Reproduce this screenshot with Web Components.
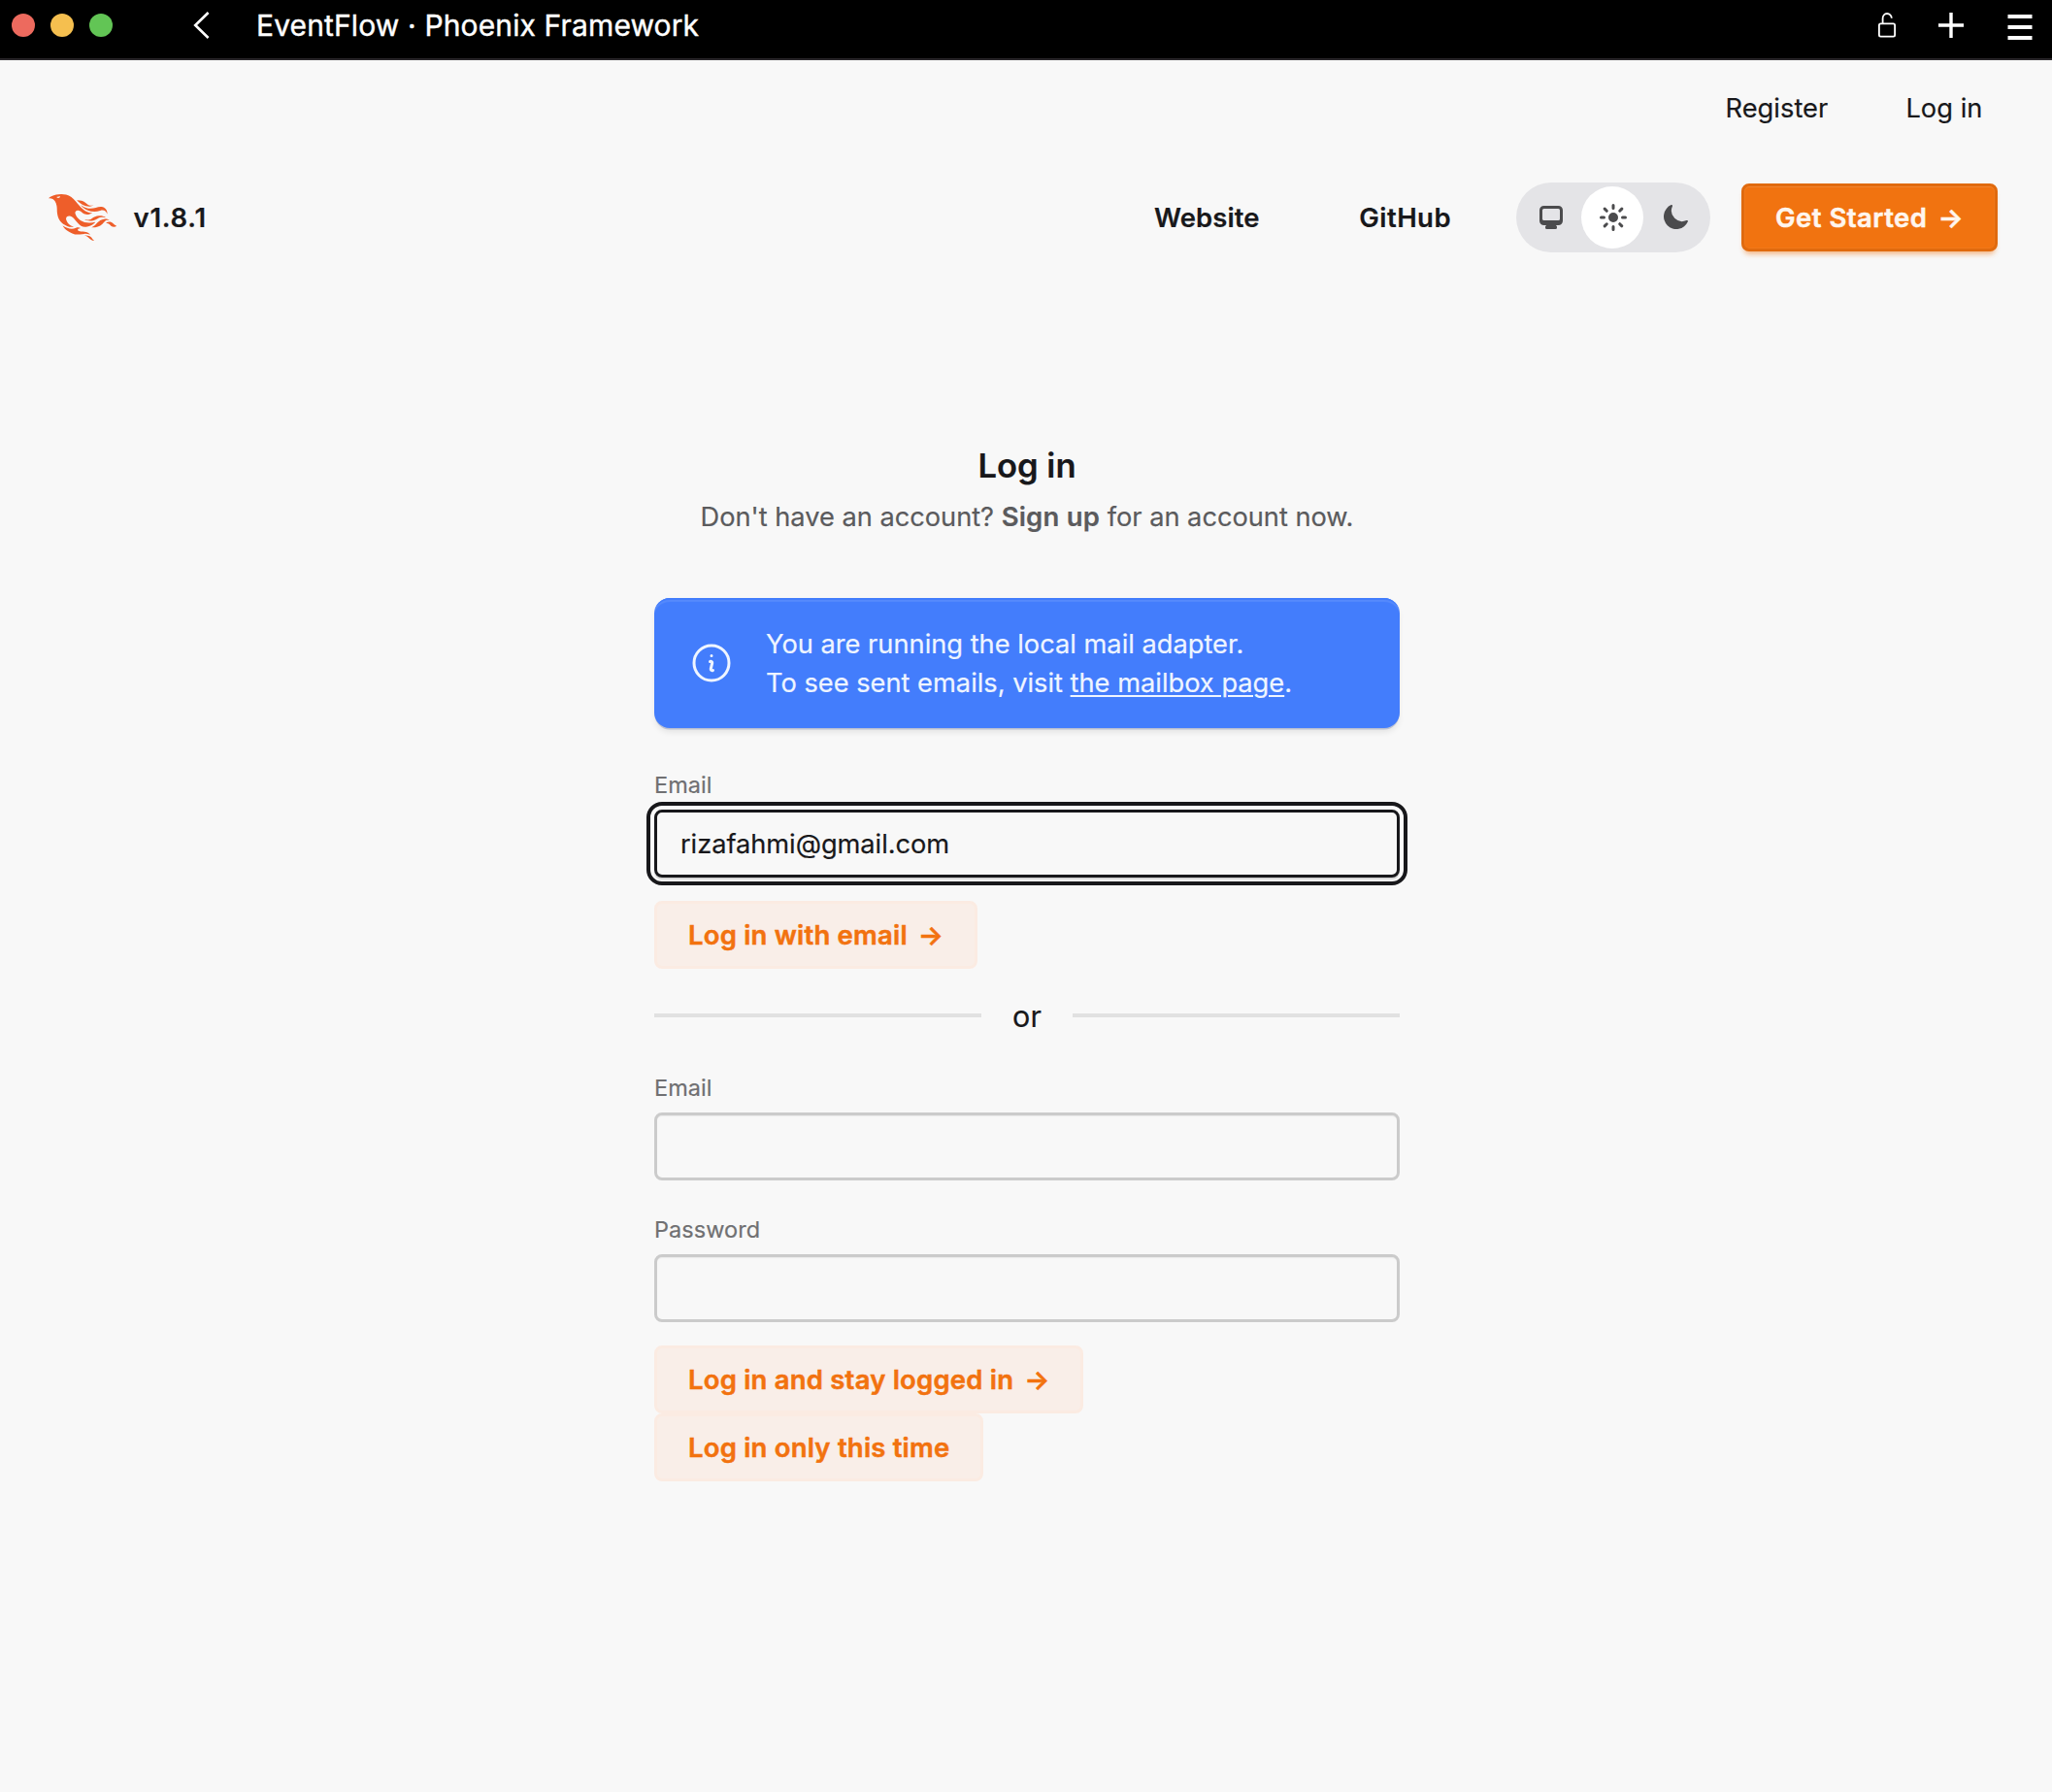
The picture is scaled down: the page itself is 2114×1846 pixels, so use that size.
<!DOCTYPE html>
<html lang="en">
<head>
<meta charset="utf-8">
<title>EventFlow · Phoenix Framework</title>
<style>
  html, body { margin: 0; padding: 0; background: #f8f8f8; }
  body {
    font-family: Inter, "Liberation Sans", sans-serif;
    font-size: 27.25px;
    line-height: 40px;
    color: #18181b;
    min-height: 1846px;
    overflow: hidden;
    -webkit-text-stroke-width: .2px;
  }
</style>
</head>
<body>
<window-bar>EventFlow · Phoenix Framework</window-bar>
<user-menu>
  <menu-link>Register</menu-link>
  <menu-link>Log in</menu-link>
</user-menu>
<site-header version="v1.8.1">
  <nav-link>Website</nav-link>
  <nav-link style="--gap: 102.5px; --spacing: .45px">GitHub</nav-link>
  <theme-toggle></theme-toggle>
  <app-button variant="primary" arrow style="--width: 264px">Get Started</app-button>
</site-header>
<login-page></login-page>

<script>
function define(name, html) {
  const template = document.createElement('template');
  template.innerHTML = html;
  customElements.define(name, class extends HTMLElement {
    constructor() {
      super();
      this.attachShadow({ mode: 'open' }).append(template.content.cloneNode(true));
    }
    connectedCallback() {
      for (const slot of this.shadowRoot.querySelectorAll('[data-attr]')) {
        slot.textContent = this.getAttribute(slot.dataset.attr) || '';
      }
    }
  });
}

define('window-bar', `
  <style>
    :host { display: flex; align-items: center; box-sizing: border-box; height: 62px; padding: 0 20px 8px 12px;
      background: #000; border-bottom: 2px solid #29262a; color: #fff; font-size: 30px; white-space: nowrap;
      letter-spacing: .13px; -webkit-text-stroke-width: .4px; }
    i { width: 24px; height: 24px; border-radius: 50%; margin-right: 16px; }
    .r { background: #ed6a5e } .y { background: #f5bf4f } .g { background: #62c555; margin-right: 0 }
    svg { display: block; fill: none; stroke: #fff; flex: none; }
    .back { margin-left: 83px; margin-right: 47px; }
    .lock { margin-left: auto; }
    .plus { margin-left: 44px; }
    .menu { margin-left: 45px; position: relative; top: 2px; }
  </style>
  <i class="r"></i><i class="y"></i><i class="g"></i>
  <svg class="back" width="18" height="28" viewBox="0 0 18 28" stroke-width="2.6"><path d="M15.6 1 2.2 14l13.4 13"/></svg>
  <span><slot></slot></span>
  <svg class="lock" width="18" height="26" viewBox="0 0 18 26" stroke-width="1.8"><rect x=".9" y="11.3" width="16.2" height="13.4" rx="1.6"/><path d="M4.6 11.3V6.2a4.6 5 0 0 1 9.2-.4"/></svg>
  <svg class="plus" width="26" height="26" viewBox="0 0 26 26" stroke-width="3.4"><path d="M13 0v26M0 13h26"/></svg>
  <svg class="menu" width="26" height="26" viewBox="0 0 26 26" stroke-width="4"><path d="M.5 2h25M.5 13h25M.5 24h25"/></svg>
`);

define('menu-link', `
  <style>:host { display: block; white-space: nowrap; letter-spacing: .05px; }</style>
  <slot></slot>
`);

define('user-menu', `
  <style>:host { display: flex; justify-content: flex-end; gap: 80px; height: 40px; padding: 30px 71.5px 0 0; }</style>
  <slot></slot>
`);

define('nav-link', `
  <style>:host { display: block; white-space: nowrap; font-weight: 600; font-size: 27.5px; letter-spacing: var(--spacing, .1px); margin-left: var(--gap, 0); }</style>
  <slot></slot>
`);

define('app-logo', `
  <style>:host { display: block; } svg { display: block; }</style>
  <svg width="71" height="48" viewBox="0 0 71 48"><path fill="#ee5e2a" d="m26.371 33.477-.552-.1c-3.92-.729-6.397-3.1-7.57-6.829-.733-2.324.597-4.035 3.035-4.148 1.995-.092 3.362 1.055 4.57 2.39 1.557 1.72 2.984 3.558 4.514 5.305 2.202 2.515 4.797 4.134 8.347 3.634 3.183-.448 5.958-1.725 8.371-3.828.363-.316.761-.592 1.144-.886l-.241-.284c-2.027.63-4.093.841-6.205.735-3.195-.16-6.24-.828-8.964-2.582-2.486-1.601-4.319-3.746-5.19-6.611-.704-2.315.736-3.934 3.135-3.6.948.133 1.746.56 2.463 1.165.583.493 1.143 1.015 1.738 1.493 2.8 2.25 6.712 2.375 10.265-.068-5.842-.026-9.817-3.24-13.308-7.313-1.366-1.594-2.7-3.216-4.095-4.785-2.698-3.036-5.692-5.71-9.79-6.623C12.8-.623 7.745.14 2.893 2.361 1.926 2.804.997 3.319 0 4.149c.494 0 .763.006 1.032 0 2.446-.064 4.28 1.023 5.602 3.024.962 1.457 1.415 3.104 1.761 4.798.513 2.515.247 5.078.544 7.605.761 6.494 4.08 11.026 10.26 13.346 2.267.852 4.591 1.135 7.172.555ZM10.751 3.852c-.976.246-1.756-.148-2.56-.962 1.377-.343 2.592-.476 3.897-.528-.107.848-.607 1.306-1.336 1.49Zm32.002 37.924c-.085-.626-.62-.901-1.04-1.228-1.857-1.446-4.03-1.958-6.333-2-1.375-.026-2.735-.128-4.031-.61-.595-.22-1.26-.505-1.244-1.272.015-.78.693-1 1.31-1.184.505-.15 1.026-.247 1.6-.382-1.46-.936-2.886-1.065-4.787-.3-2.993 1.202-5.943 1.06-8.926-.017-1.684-.608-3.179-1.563-4.735-2.408l-.077.057c1.29 2.115 3.034 3.817 5.004 5.271 3.793 2.8 7.936 4.471 12.784 3.73A66.714 66.714 0 0 1 37 40.877c1.98-.16 3.866.398 5.753.899Zm-9.14-30.345c-.105-.076-.206-.266-.42-.069 1.745 2.36 3.985 4.098 6.683 5.193 4.354 1.767 8.773 2.07 13.293.51 3.51-1.21 6.033-.028 7.343 3.38.19-3.955-2.137-6.837-5.843-7.401-2.084-.318-4.01.373-5.962.94-5.434 1.575-10.485.798-15.094-2.553Zm27.085 15.425c.708.059 1.416.123 2.124.185-1.6-1.405-3.55-1.517-5.523-1.404-3.003.17-5.167 1.903-7.14 3.972-1.739 1.824-3.31 3.87-5.903 4.604.043.078.054.117.066.117.35.005.699.021 1.047.005 3.768-.17 7.317-.965 10.14-3.7.89-.86 1.685-1.817 2.544-2.71.716-.746 1.584-1.159 2.645-1.07Zm-8.753-4.67c-2.812.246-5.254 1.409-7.548 2.943-1.766 1.18-3.654 1.738-5.776 1.37-.374-.066-.75-.114-1.124-.17l-.013.156c.135.07.265.151.405.207.354.14.702.308 1.07.395 4.083.971 7.992.474 11.516-1.803 2.221-1.435 4.521-1.707 7.013-1.336.252.038.503.083.756.107.234.022.479.255.795.003-2.179-1.574-4.526-2.096-7.094-1.872Zm-10.049-9.544c1.475.051 2.943-.142 4.486-1.059-.452.04-.643.04-.827.076-2.126.424-4.033-.04-5.733-1.383-.623-.493-1.257-.974-1.889-1.457-2.503-1.914-5.374-2.555-8.514-2.5.05.154.054.26.108.315 3.417 3.455 7.371 5.836 12.369 6.008Zm24.727 17.731c-2.114-2.097-4.952-2.367-7.578-.537 1.738.078 3.043.632 4.101 1.728a13 13 0 0 0 1.182 1.106c1.6 1.29 4.311 1.352 5.896.155-1.861-.726-1.861-.726-3.601-2.452Zm-21.058 16.06c-1.858-3.46-4.981-4.24-8.59-4.008a9.667 9.667 0 0 1 2.977 1.39c.84.586 1.547 1.311 2.243 2.055 1.38 1.473 3.534 2.376 4.962 2.07-.656-.412-1.238-.848-1.592-1.507Z"/></svg>
`);

define('theme-toggle', `
  <style>
    :host { display: grid; grid-template-columns: 67px 64px 1fr; align-items: center; justify-items: center; box-sizing: border-box;
      width: 200px; height: 72px; border-radius: 36px; background: #e4e4e7; margin-left: 67px; }
    svg { display: block; width: 32px; height: 32px; fill: #4b4b4d; }
    span { display: grid; place-items: center; }
    .on { width: 64px; height: 64px; border-radius: 50%; background: #fff; }
    .on svg { margin-left: 2px; }
    .sys svg { margin-left: 5px; }
    .moon svg { margin-right: 4px; }
  </style>
  <span class="sys"><svg viewBox="0 0 16 16"><path fill-rule="evenodd" d="M2 4.25A2.25 2.25 0 0 1 4.25 2h7.5A2.25 2.25 0 0 1 14 4.25v5.5A2.25 2.25 0 0 1 11.75 12h-1.312c.1.128.21.248.328.36a.75.75 0 0 1 .234.545v.345a.75.75 0 0 1-.75.75h-4.5a.75.75 0 0 1-.75-.75v-.345a.75.75 0 0 1 .234-.545c.118-.111.228-.232.328-.36H4.25A2.25 2.25 0 0 1 2 9.75v-5.5Zm2.25-.75a.75.75 0 0 0-.75.75v4.5c0 .414.336.75.75.75h7.5a.75.75 0 0 0 .75-.75v-4.5a.75.75 0 0 0-.75-.75h-7.5Z"/></svg></span>
  <span class="on"><svg viewBox="0 0 16 16"><path d="M8 1a.75.75 0 0 1 .75.75v1.5a.75.75 0 0 1-1.5 0v-1.5A.75.75 0 0 1 8 1ZM10.5 8a2.5 2.5 0 1 1-5 0 2.5 2.5 0 0 1 5 0ZM12.95 4.11a.75.75 0 1 0-1.06-1.06l-1.062 1.06a.75.75 0 0 0 1.061 1.062l1.06-1.061ZM15 8a.75.75 0 0 1-.75.75h-1.5a.75.75 0 0 1 0-1.5h1.5A.75.75 0 0 1 15 8ZM11.89 12.95a.75.75 0 0 0 1.06-1.06l-1.06-1.062a.75.75 0 0 0-1.062 1.061l1.061 1.06ZM8 12a.75.75 0 0 1 .75.75v1.5a.75.75 0 0 1-1.5 0v-1.5A.75.75 0 0 1 8 12ZM5.172 11.89a.75.75 0 0 0-1.061-1.062L3.05 11.89a.75.75 0 1 0 1.06 1.06l1.06-1.06ZM4 8a.75.75 0 0 1-.75.75h-1.5a.75.75 0 0 1 0-1.5h1.5A.75.75 0 0 1 4 8ZM4.11 5.172A.75.75 0 0 0 5.173 4.11L4.11 3.05a.75.75 0 1 0-1.06 1.06l1.06 1.06Z"/></svg></span>
  <span class="moon"><svg viewBox="0 0 16 16"><path d="M14.438 10.148c.19-.425-.321-.787-.748-.601A5.5 5.5 0 0 1 6.453 2.31c.186-.427-.176-.938-.6-.748a6.501 6.501 0 1 0 8.585 8.586Z"/></svg></span>
`);

define('app-button', `
  <style>
    :host { display: flex; align-items: center; box-sizing: border-box; width: var(--width); height: 70px; padding: 0 32px;
      border: 3px solid #fbebe2; border-radius: 8px; background: #f9eee8; color: #f2720f;
      font-weight: 600; font-size: 27.5px; letter-spacing: .2px; white-space: nowrap; -webkit-text-stroke-width: .5px; }
    :host([variant=primary]) { background: #f17310; border-color: #e06a0e; color: #fff6ee; letter-spacing: .47px; margin-left: 32px;
      box-shadow: inset 0 1px 0 rgba(255,255,255,.1), inset 0 0 0 1px rgba(255,255,255,.04), 0 6px 6px -4px rgba(241,115,16,.35), 0 4px 5px -2px rgba(241,115,16,.3); }
    .arrow { display: none; margin-left: 11px; letter-spacing: 0; }
    :host([arrow]) .arrow { display: block; }
  </style>
  <span><slot></slot></span><span class="arrow">→</span>
`);

define('site-header', `
  <style>
    :host { display: flex; align-items: center; height: 72px; margin-top: 56px; padding: 0 56px 0 50px; }
    .version { margin-left: 16.5px; margin-right: auto; font-weight: 600; font-size: 27.5px; letter-spacing: .75px; }
  </style>
  <app-logo></app-logo><span class="version" data-attr="version"></span><slot></slot>
`);

define('info-alert', `
  <style>
    :host { display: flex; align-items: center; box-sizing: border-box; height: 134px; padding-left: 35px; border-radius: 16px;
      background: #437dfc; color: #eff5ff; letter-spacing: -.01px; white-space: nowrap;
      box-shadow: inset 0 4px 0 -2px #437dfc, inset 0 5px 1px -1px rgba(255,255,255,.1), 0 2px 0 -.5px rgba(30,60,140,.22), 0 5px 6px -1px rgba(0,0,0,.09); }
    svg { display: block; width: 48px; height: 48px; margin-right: 32px; fill: none; stroke: currentColor; stroke-width: 1.5; stroke-linecap: round; stroke-linejoin: round; }
    div { padding-top: 2px; }
  </style>
  <svg viewBox="0 0 24 24"><path d="m11.25 11.25.041-.02a.75.75 0 0 1 1.063.852l-.708 2.836a.75.75 0 0 0 1.063.853l.041-.021M21 12a9 9 0 1 1-18 0 9 9 0 0 1 18 0Zm-9-3.75h.008v.008H12V8.25Z"/></svg>
  <div><slot></slot></div>
`);

define('text-field', `
  <style>
    :host { display: block; }
    .label { height: 37px; line-height: 37px; padding-bottom: 7px; font-size: 23.5px; color: #707072; letter-spacing: .05px; }
    .box { display: flex; align-items: center; box-sizing: border-box; height: 70px; padding: 2px 24px 0; border: 3px solid #cbcbcb; border-radius: 8px;
      letter-spacing: -.06px; box-shadow: inset 0 2px 1px -1px rgba(0,0,0,.06); }
    :host([focused]) .box { border-color: #18181b; outline: 4px solid #18181b; outline-offset: 4px;
      box-shadow: 0 2px 1px -.5px rgba(0,0,0,.15), 0 0 0 4px #fbfbfb; }
  </style>
  <div class="label" data-attr="label"></div>
  <div class="box" role="textbox"><slot></slot></div>
`);

define('or-divider', `
  <style>
    :host { display: flex; align-items: center; gap: 32px; height: 40px; font-size: 30.5px; }
    :host::before, :host::after { content: ""; flex: 1; height: 4px; background: #e1e1e1; position: relative; top: -1px; }
  </style>
  <slot></slot>
`);

define('login-page', `
  <style>
    :host { display: block; width: 768px; margin: 196px 0 0 674px; }
    h1 { margin: 0; height: 49px; line-height: 47px; font-size: 34.6px; font-weight: 600; text-align: center; }
    p { margin: 7px 0 63px; text-align: center; color: #5b5b5d; white-space: nowrap; letter-spacing: -.03px; }
    b { font-weight: 600; font-size: 27.5px; letter-spacing: .2px; }
    a { text-decoration: underline; text-decoration-thickness: 2px; text-underline-offset: 3px; }
  </style>
  <h1>Log in</h1>
  <p>Don't have an account? <b>Sign up</b> for an account now.</p>
  <info-alert>You are running the local mail adapter.<br>To see sent emails, visit <a>the mailbox page</a>.</info-alert>
  <text-field label="Email" focused style="margin-top: 40px">rizafahmi@gmail.com</text-field>
  <app-button arrow style="--width: 333px; margin-top: 24px">Log in with email</app-button>
  <or-divider style="margin-top: 29px">or</or-divider>
  <text-field label="Email" style="margin-top: 35px"></text-field>
  <text-field label="Password" style="margin-top: 32px"></text-field>
  <app-button arrow style="--width: 442px; margin-top: 24px">Log in and stay logged in</app-button>
  <app-button style="--width: 339px">Log in only this time</app-button>
`);
</script>
</body>
</html>
